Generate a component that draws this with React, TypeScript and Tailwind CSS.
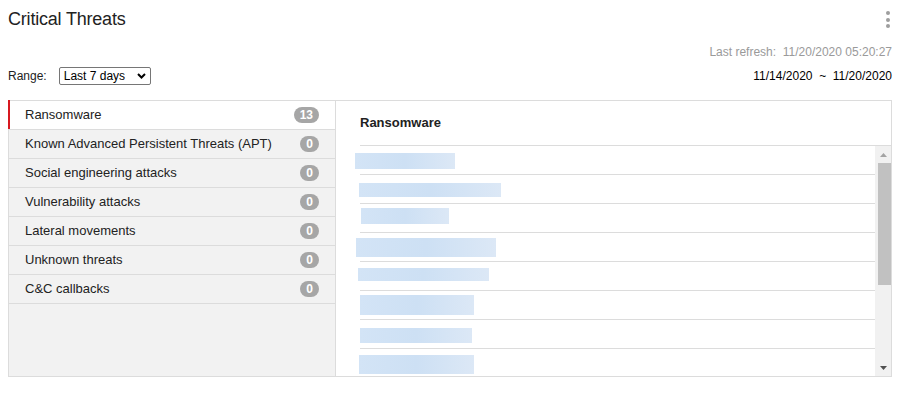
const threats = [
  { name: "Ransomware", count: 13 },
  { name: "Known Advanced Persistent Threats (APT)", count: 0 },
  { name: "Social engineering attacks", count: 0 },
  { name: "Vulnerability attacks", count: 0 },
  { name: "Lateral movements", count: 0 },
  { name: "Unknown threats", count: 0 },
  { name: "C&C callbacks", count: 0 },
];

// redacted entries, drawn as blurred blocks
const redacted = [
  "ml-[-5px] mt-[7px] w-[100px] h-[16px]",
  "ml-[-1px] mt-[8px] w-[142px] h-[14px]",
  "ml-[1px] mt-[4px] w-[88px] h-[16px]",
  "ml-[-4px] mt-[5px] w-[140px] h-[19px]",
  "ml-[-2px] mt-[6px] w-[131px] h-[13px]",
  "ml-[0px] mt-[4px] w-[114px] h-[20px]",
  "ml-[0px] mt-[8px] w-[112px] h-[15px]",
  "ml-[-1px] mt-[6px] w-[115px] h-[19px]",
];

function Badge({ n }: { n: number }) {
  return (
    <span className="flex h-[16px] min-w-[19px] items-center justify-center rounded-full bg-[#a6a6a6] px-[6px] text-[12px] font-bold leading-none text-white">
      {n}
    </span>
  );
}

function Scrollbar() {
  return (
    <div className="flex w-[16px] flex-col items-center bg-[#f1f1f1]">
      <svg width="7" height="4" viewBox="0 0 7 4" className="mt-[7px]">
        <path d="M3.5 0 L7 4 L0 4 Z" fill="#a3a3a3" />
      </svg>
      <div className="mt-[6px] ml-[2px] h-[122px] w-[13px] bg-[#c1c1c1]" />
      <div className="flex-1" />
      <svg width="7" height="4" viewBox="0 0 7 4" className="mb-[6px]">
        <path d="M0 0 L7 0 L3.5 4 Z" fill="#505050" />
      </svg>
    </div>
  );
}

export default function App() {
  return (
    <div className="h-[396px] w-[906px] overflow-hidden bg-white pl-[8px] pr-[14px] font-['Liberation_Sans',Arial,sans-serif] text-[#222]">
      <div className="flex h-[44px] items-start justify-between">
        <h1 className="mt-[7px] text-[18px] leading-[24px] tracking-[-0.2px] text-[#222]">Critical Threats</h1>
        <div className="mr-[2px] mt-[11px] flex flex-col gap-[2.5px]">
          <span className="size-[4px] rounded-full bg-[#9e9e9e]" />
          <span className="size-[4px] rounded-full bg-[#9e9e9e]" />
          <span className="size-[4px] rounded-full bg-[#9e9e9e]" />
        </div>
      </div>

      <div className="h-[16px] whitespace-pre text-right text-[12px] leading-[16px] text-[#9a9a9a]">
        Last refresh:  11/20/2020 05:20:27
      </div>

      <div className="mt-[7px] flex h-[18px] items-center justify-between text-[12px] leading-[18px]">
        <div className="flex items-center">
          <span>Range:</span>
          <div className="ml-[12px] flex h-[18px] w-[92px] items-center justify-between rounded-[2px] border border-[#767676] pl-[4px] pr-[4px] text-black">
            <span className="leading-[16px]">Last 7 days</span>
            <svg width="9" height="6" viewBox="0 0 9 6">
              <path d="M1 1 L4.5 4.5 L8 1" fill="none" stroke="#000" strokeWidth="2" />
            </svg>
          </div>
        </div>
        <div className="whitespace-pre text-black">11/14/2020  ~  11/20/2020</div>
      </div>

      <div className="mt-[15px] flex h-[277px] border border-[#dcdcdc]">
        <div className="w-[327px] border-r border-[#dcdcdc] bg-[#f2f2f2]">
          {threats.map((t, i) => (
            <div
              key={t.name}
              className={
                "relative flex h-[29px] items-center justify-between border-b border-[#dcdcdc] pl-[16px] pr-[16px] text-[13px] " +
                (i === 0 ? "bg-white" : "")
              }
            >
              {i === 0 && <span className="absolute -left-[1px] -top-[1px] h-[29px] w-[2px] bg-[#d71920]" />}
              <span>{t.name}</span>
              <Badge n={t.count} />
            </div>
          ))}
        </div>

        <div className="flex flex-1 flex-col">
          <div className="ml-[24px] flex h-[45px] shrink-0 items-center border-b border-[#dcdcdc] pb-[1px] text-[13px] font-bold">
            Ransomware
          </div>
          <div className="flex min-h-0 flex-1">
            <div className="flex-1 overflow-hidden pl-[24px]">
              {redacted.map((cls, i) => (
                <div key={i} className="flex h-[29px] shrink-0 items-start border-b border-[#dcdcdc]">
                  <div className={"bg-linear-to-r from-[#d3e4f6] via-[#cde0f4] to-[#dce8f6] blur-[0.6px] " + cls} />
                </div>
              ))}
            </div>
            <Scrollbar />
          </div>
        </div>
      </div>
    </div>
  );
}
